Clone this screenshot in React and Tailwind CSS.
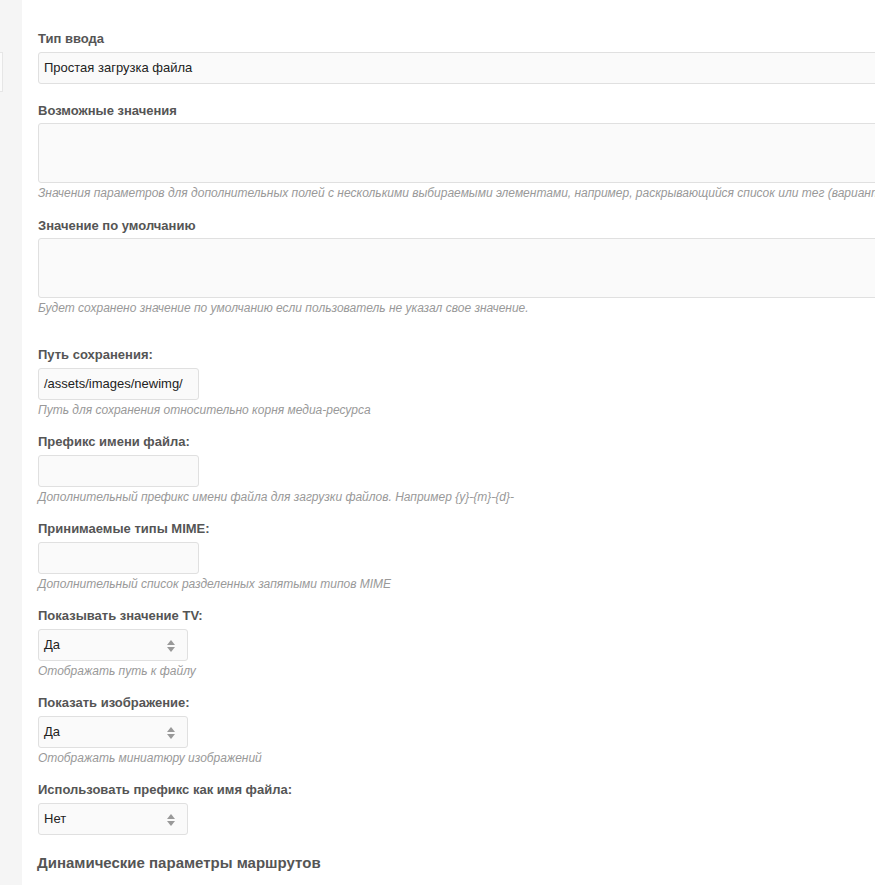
import React from "react";

const font = { fontFamily: '"Liberation Sans", Arial, sans-serif' };

function Label({ children }) {
  return (
    <div className="text-[13px] leading-[18px] font-bold text-[#555]">{children}</div>
  );
}

function Help({ children }) {
  return (
    <div className="mt-[2px] text-[12px] leading-[16px] italic text-[#999] whitespace-nowrap">
      {children}
    </div>
  );
}

function Arrows() {
  return (
    <svg width="8" height="12" viewBox="0 0 8 12" className="absolute right-[12px] top-[10px]">
      <path d="M4 0 L8 5 L0 5 Z" fill="#999" />
      <path d="M4 12 L8 7 L0 7 Z" fill="#999" />
    </svg>
  );
}

function Select({ value }) {
  return (
    <div className="relative mt-[4px] w-[150px] h-[32px] bg-[#fafafa] border border-[#e0e0e0] rounded-[3px] pl-[5px] text-[13px] leading-[30px] text-[#222]">
      {value}
      <Arrows />
    </div>
  );
}

function SmallInput({ value }) {
  return (
    <div className="mt-[4px] w-[161px] h-[32px] bg-[#fafafa] border border-[#e0e0e0] rounded-[3px] pl-[5px] text-[13px] leading-[30px] text-[#222]">
      {value}
    </div>
  );
}

export default function App() {
  return (
    <div style={font} className="w-[875px] min-h-[885px] h-[885px] overflow-hidden flex bg-white">
      <div className="w-[22px] shrink-0 bg-[#f5f5f5] pt-[52px]">
        <div className="w-[3px] h-[40px] bg-[#fbfbfb] border-y border-r border-[#e6e6e6]" />
      </div>
      <div className="flex-1 overflow-hidden pl-[16px] pt-[30px]">
        <Label>Тип ввода</Label>
        <div className="mt-[4px] w-[880px] h-[32px] bg-[#fafafa] border border-[#e0e0e0] rounded-[3px] pl-[5px] text-[13px] leading-[30px] text-[#222]">
          Простая загрузка файла
        </div>

        <div className="mt-[18px]">
          <Label>Возможные значения</Label>
        </div>
        <div className="mt-[3px] w-[880px] h-[60px] bg-[#fafafa] border border-[#e0e0e0] rounded-[3px]" />
        <Help>
          Значения параметров для дополнительных полей с несколькими выбираемыми элементами, например, раскрывающийся список или тег (вариант1==значение1||вариант2==значение2)
        </Help>

        <div className="mt-[16px]">
          <Label>Значение по умолчанию</Label>
        </div>
        <div className="mt-[3px] w-[880px] h-[60px] bg-[#fafafa] border border-[#e0e0e0] rounded-[3px]" />
        <Help>Будет сохранено значение по умолчанию если пользователь не указал свое значение.</Help>

        <div className="mt-[30px]">
          <Label>Путь сохранения:</Label>
        </div>
        <SmallInput value="/assets/images/newimg/" />
        <Help>Путь для сохранения относительно корня медиа-ресурса</Help>

        <div className="mt-[15px]">
          <Label>Префикс имени файла:</Label>
        </div>
        <SmallInput value="" />
        <Help>Дополнительный префикс имени файла для загрузки файлов. Например {"{y}-{m}-{d}-"}</Help>

        <div className="mt-[15px]">
          <Label>Принимаемые типы MIME:</Label>
        </div>
        <SmallInput value="" />
        <Help>Дополнительный список разделенных запятыми типов MIME</Help>

        <div className="mt-[15px]">
          <Label>Показывать значение TV:</Label>
        </div>
        <Select value="Да" />
        <Help>Отображать путь к файлу</Help>

        <div className="mt-[15px]">
          <Label>Показать изображение:</Label>
        </div>
        <Select value="Да" />
        <Help>Отображать миниатюру изображений</Help>

        <div className="mt-[15px]">
          <Label>Использовать префикс как имя файла:</Label>
        </div>
        <Select value="Нет" />

        <div className="mt-[18px] -ml-[1px] text-[15px] leading-[20px] font-bold text-[#555]">
          Динамические параметры маршрутов
        </div>
      </div>
    </div>
  );
}
